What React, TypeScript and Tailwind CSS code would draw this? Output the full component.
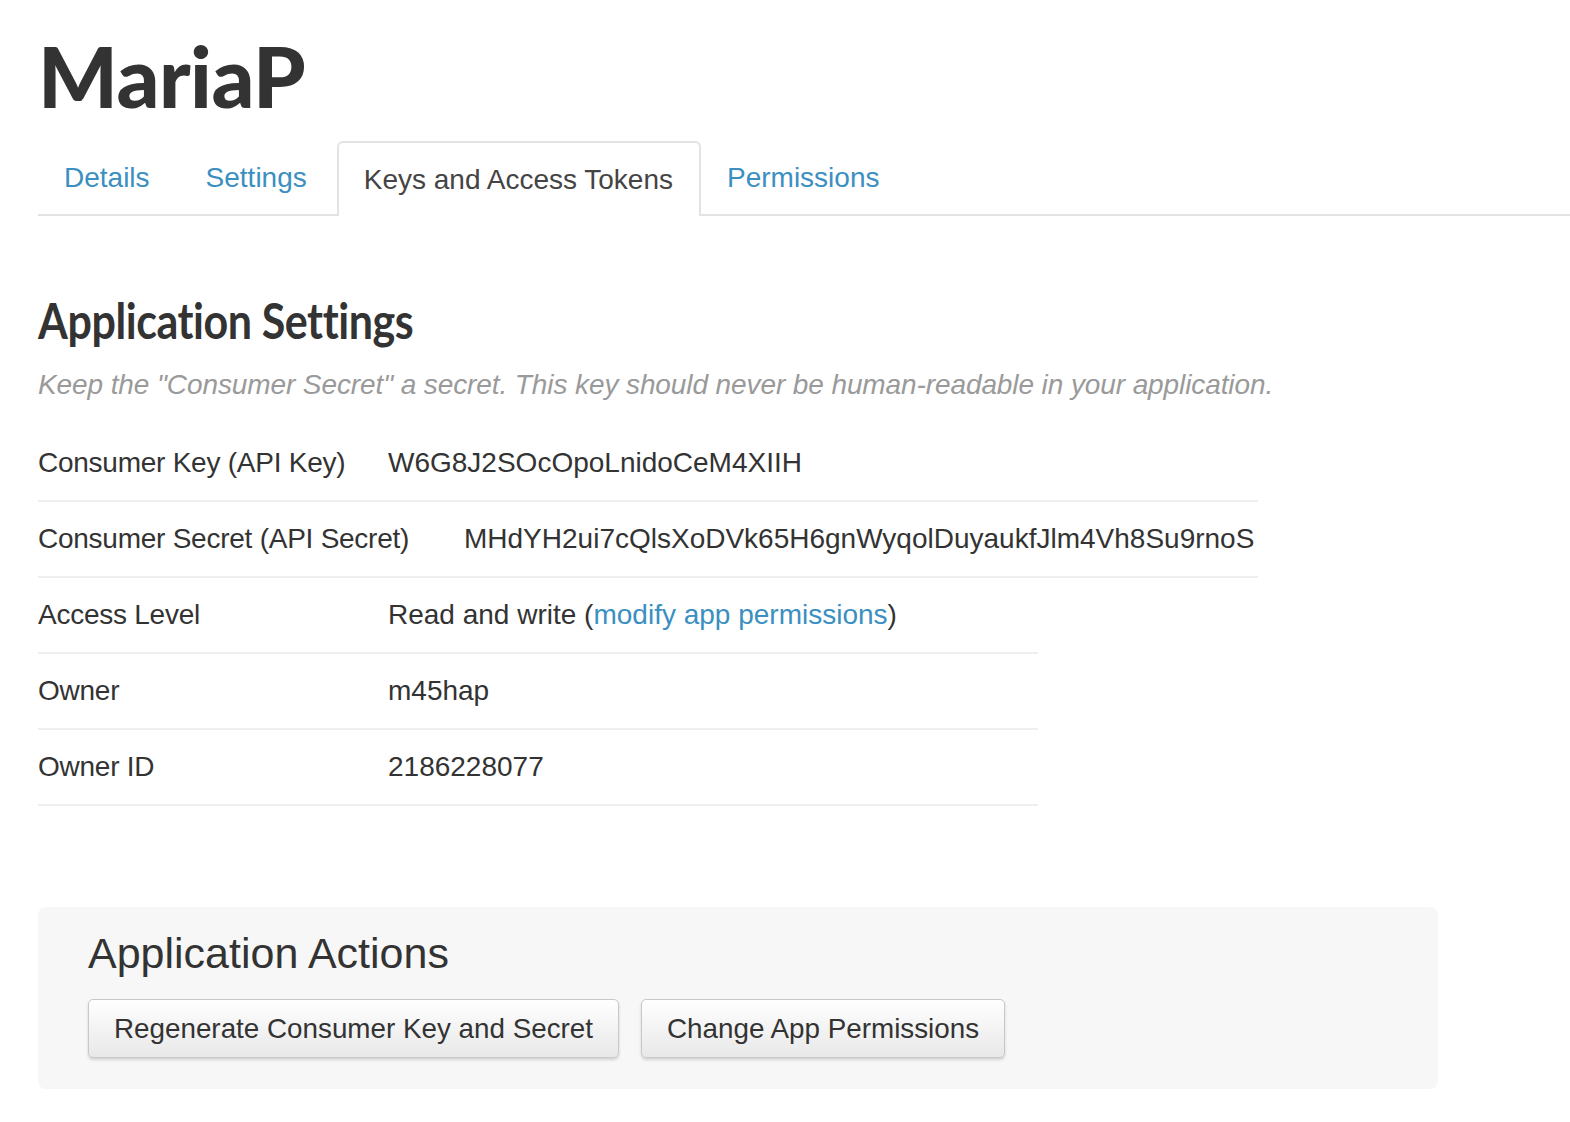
const rows = [
  { label: 'Consumer Key (API Key)', value: 'W6G8J2SOcOpoLnidoCeM4XIIH', labelW: 'w-[350px]' },
  { label: 'Consumer Secret (API Secret)', value: 'MHdYH2ui7cQlsXoDVk65H6gnWyqolDuyaukfJlm4Vh8Su9rnoS', labelW: 'w-[426px]' },
];

const rows2 = [
  { label: 'Access Level', value: null },
  { label: 'Owner', value: 'm45hap' },
  { label: 'Owner ID', value: '2186228077' },
];

function Tab({ label, active }: { label: string; active?: boolean }) {
  if (active) {
    return (
      <div className="-mb-[2px] h-[75px] flex items-center pl-[25px] pr-[26px] bg-white border-2 border-b-0 border-[#e3e3e3] rounded-t-[6px] text-[#444]">
        {label}
      </div>
    );
  }
  return (
    <div className="h-[73px] flex items-center pl-[26px] pr-[30px] text-[#3b8fc1]">{label}</div>
  );
}

export default function App() {
  return (
    <div className="min-h-screen bg-white text-[#333] pl-[38px] font-['Liberation_Sans',Arial,sans-serif]">
      <h1 className="pt-[30px] text-[84px] leading-[92px] font-black tracking-[-0.5px] font-['Lato',sans-serif] text-[#333]">
        MariaP
      </h1>

      <div className="mt-[19px] flex items-end border-b-2 border-[#e3e3e3] text-[28px]">
        <Tab label="Details" />
        <Tab label="Settings" />
        <Tab label="Keys and Access Tokens" active />
        <Tab label="Permissions" />
      </div>

      <h2 className="mt-[74px] text-[50px] leading-[60px] font-bold font-['Lato',sans-serif] origin-left scale-x-[0.86] tracking-[-0.5px] whitespace-nowrap">
        Application Settings
      </h2>
      <p className="mt-[18px] text-[28px] leading-[34px] italic text-[#9a9a9a] tracking-[-0.1px] whitespace-nowrap">
        Keep the "Consumer Secret" a secret. This key should never be human-readable in your application.
      </p>

      <div className="mt-[24px] text-[28px]">
        {rows.map((r) => (
          <div key={r.label} className="w-[1220px] h-[76px] flex items-center border-b-2 border-[#eeeeee]">
            <div className={`${r.labelW} shrink-0 tracking-[-0.25px]`}>{r.label}</div>
            <div className="whitespace-nowrap">{r.value}</div>
          </div>
        ))}
        {rows2.map((r) => (
          <div key={r.label} className="w-[1000px] h-[76px] flex items-center border-b-2 border-[#eeeeee]">
            <div className="w-[350px] shrink-0 tracking-[-0.25px]">{r.label}</div>
            <div className="whitespace-nowrap">
              {r.value ?? (
                <>
                  Read and write (<span className="text-[#3b8fc1]">modify app permissions</span>)
                </>
              )}
            </div>
          </div>
        ))}
      </div>

      <div className="mt-[101px] w-[1400px] h-[182px] bg-[#f7f7f7] rounded-[8px] px-[50px] pt-[22px]">
        <h3 className="text-[43px] leading-[48px] font-light">Application Actions</h3>
        <div className="mt-[22px] flex gap-[22px] text-[27.8px]">
          <button className="h-[59px] px-[25px] rounded-[5px] border border-[#c8c8c8] bg-gradient-to-b from-white to-[#e8e8e8] shadow-[0_2px_3px_rgba(0,0,0,0.15)] text-[#333]">
            Regenerate Consumer Key and Secret
          </button>
          <button className="h-[59px] px-[25px] rounded-[5px] border border-[#c8c8c8] bg-gradient-to-b from-white to-[#e8e8e8] shadow-[0_2px_3px_rgba(0,0,0,0.15)] text-[#333]">
            Change App Permissions
          </button>
        </div>
      </div>
    </div>
  );
}
